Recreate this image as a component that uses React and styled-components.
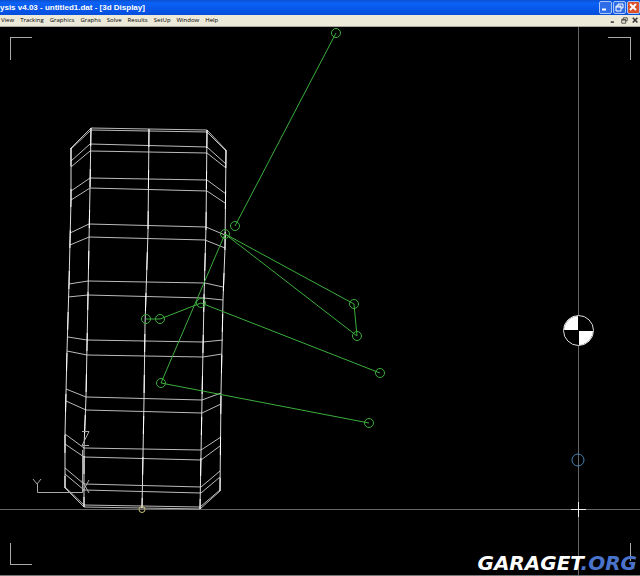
import React from "react";
import styled, { createGlobalStyle } from "styled-components";

const GlobalStyle = createGlobalStyle`
  * { box-sizing: border-box; }
  html, body { margin: 0; background: #000; }
`;

const AppWindow = styled.div`
  display: flex;
  flex-direction: column;
  min-height: 100vh;
  background: #000;
  font-family: "Open Sans", "Noto Sans", sans-serif;
`;

const TitleBar = styled.header`
  display: flex;
  align-items: center;
  justify-content: space-between;
  height: 15px;
  background: linear-gradient(#0a50d0 0, #0b62f5 3px, #0553e6 11px, #0450dc 15px);
`;

const Title = styled.h1`
  margin: 0;
  color: #fff;
  font-family: "Liberation Sans", Arial, sans-serif;
  font-size: 8px;
  line-height: 15px;
  font-weight: 700;
  white-space: nowrap;
`;

const CaptionButtons = styled.div`
  display: flex;
  gap: 1px;
`;

const CaptionButton = styled.button`
  display: grid;
  place-items: center;
  width: 13px;
  height: 13px;
  padding: 0;
  border: 1px solid #a9c5f8;
  border-radius: 2px;
  color: #fff;
  background: ${({ $close }) => ($close ? "#dc5129" : "#2e6be6")};
`;

const MenuBar = styled.nav`
  display: flex;
  align-items: center;
  justify-content: space-between;
  height: 12px;
  background: #ece9d8;
  border-bottom: 1px solid #aaa89c;
`;

const MenuItems = styled.div`
  display: flex;
  gap: 6px;
  padding-left: 1px;
`;

const MenuItem = styled.button`
  padding: 0;
  border: 0;
  background: none;
  color: #000;
  font-family: inherit;
  font-size: 6px;
  line-height: 11px;
  white-space: nowrap;
`;

const DocumentButtons = styled.div`
  display: flex;
  gap: 1px;
`;

const DocumentButton = styled.button`
  display: grid;
  place-items: center;
  width: 10px;
  height: 10px;
  padding: 0;
  border: 0;
  background: none;
  color: #333;
`;

const Viewport = styled.main`
  position: relative;
  flex: 1;
  border-bottom: 1px solid #777;
`;

const Scene = styled.svg`
  display: block;
  width: 100%;
  height: auto;
  fill: none;
  stroke-width: 1;
`;

const Watermark = styled.div`
  position: absolute;
  right: 3px;
  bottom: 0;
  color: #fff;
  font-family: "DejaVu Sans", sans-serif;
  font-size: 20px;
  line-height: 24px;
  font-weight: 700;
  font-style: italic;
`;

const Domain = styled.span`
  color: #4a74cc;
`;

const menus = ["View", "Tracking", "Graphics", "Graphs", "Solve", "Results", "SetUp", "Window", "Help"];

const glyphs = {
  Minimize: <path d="M1 6.5h4" strokeWidth="2" />,
  Restore: <path d="M3 3V1h5v4H6M1 3h5v5H1zM1 4h5" />,
  Close: <path d="M1 1l6 6M7 1l-6 6" strokeWidth="2" />,
};

function Glyph({ name, size }) {
  return (
    <svg width={size} height={size} viewBox="0 0 9 9" fill="none" stroke="currentColor" aria-hidden="true">
      {glyphs[name]}
    </svg>
  );
}

// Each rib of the tyre: outer left, inner left, inner right, outer right.
const ribs = [
  "71,148 91,128 207,130 226,150",
  "71,149 91,130 207,132 226,151",
  "71,161 90,144 207,147 226,164",
  "71,167 90,151 207,153 226,168",
  "71,191 90,178 207,180 226,194",
  "71,200 90,188 207,191 225,203",
  "70,233 89,224 206,227 225,235",
  "70,245 89,237 205,240 225,248",
  "69,284 88,281 205,283 223,287",
  "68,297 88,295 204,298 223,300",
  "68,337 87,340 203,342 223,340",
  "67,351 87,355 203,357 222,354",
  "66,389 86,397 202,400 221,393",
  "66,401 86,410 202,413 221,404",
  "65,434 84,448 201,450 221,437",
  "65,444 84,457 201,460 220,446",
  "65,468 84,484 201,487 220,471",
  "65,474 84,490 201,493 220,477",
  "65,487 84,505 200,507 220,490",
  "65,488 84,507 200,509 220,491",
];

const uprights = [
  "71,148 71,200 69,284 67,351 65,434 65,488",
  "91,128 90,188 88,295 86,397 84,448 84,507",
  "149,129 148,232 145,325 144,400 142,508",
  "207,130 206,227 204,298 202,400 200,509",
  "226,150 225,248 223,300 221,393 220,491",
];

const links = [
  "336,33 235,226",
  "225,234 354,304 357,336 225,234 161,383 369,423",
  "146,319 160,319 201,303 380,373",
];

const joints = [
  [336, 33], [235, 226], [225, 234], [354, 304], [357, 336], [380, 373],
  [369, 423], [161, 383], [146, 319], [160, 319], [201, 303],
];

function SuspensionView() {
  return (
    <Scene viewBox="0 27 640 548" role="img" aria-label="3d suspension display">
      <g stroke="#666" shapeRendering="crispEdges">
        <path d="M0 509.5H640M578.5 27V575" />
        <path stroke="#aaa" d="M10.500 59.500V37.500H32M608 37.500H630.500V60M10.500 543V564.500H32M630.500 543V561" />
        <path stroke="#eee" d="M571 509.500H586M578.500 502V517" />
      </g>
      <g stroke="#bbb">
        {ribs.map((points) => <polyline key={points} points={points} />)}
      </g>
      <g stroke="#ddd">
        {uprights.map((points) => <polyline key={points} points={points} />)}
      </g>
      <g stroke="#fff" strokeDasharray="18 23">
        {uprights.map((points) => <polyline key={points} points={points} />)}
      </g>
      <g stroke="#3cae3c">
        {links.map((points) => <polyline key={points} points={points} />)}
        {joints.map(([x, y]) => <circle key={`${x}-${y}`} cx={x} cy={y} r="4.500" />)}
      </g>
      <path stroke="#aaa" d="M33 479L37 484L41 479M37.500 484V492.500H82.500V450M82 431.500H89L82 445.500H89M82 480L89 493M89 480L82 493" />
      <circle cx="142" cy="509.500" r="3" stroke="#c8c078" />
      <circle cx="578" cy="460" r="6" stroke="#4682b4" />
      <circle cx="578.500" cy="330.500" r="15" fill="#000" stroke="#ddd" />
      <path fill="#fff" d="M578 330V316A15 15 0 0 0 564 330ZM579 331V345A15 15 0 0 0 593 331Z" />
    </Scene>
  );
}

export default function App() {
  return (
    <>
      <GlobalStyle />
      <AppWindow>
        <TitleBar>
          <Title>ysis v4.03 - untitled1.dat - [3d Display]</Title>
          <CaptionButtons>
            {Object.keys(glyphs).map((name) => (
              <CaptionButton key={name} aria-label={name} $close={name === "Close"}>
                <Glyph name={name} size={9} />
              </CaptionButton>
            ))}
          </CaptionButtons>
        </TitleBar>
        <MenuBar>
          <MenuItems>
            {menus.map((label) => <MenuItem key={label}>{label}</MenuItem>)}
          </MenuItems>
          <DocumentButtons>
            {Object.keys(glyphs).map((name) => (
              <DocumentButton key={name} aria-label={`${name} document`}>
                <Glyph name={name} size={7} />
              </DocumentButton>
            ))}
          </DocumentButtons>
        </MenuBar>
        <Viewport>
          <SuspensionView />
          <Watermark>GARAGET<Domain>.ORG</Domain></Watermark>
        </Viewport>
      </AppWindow>
    </>
  );
}
